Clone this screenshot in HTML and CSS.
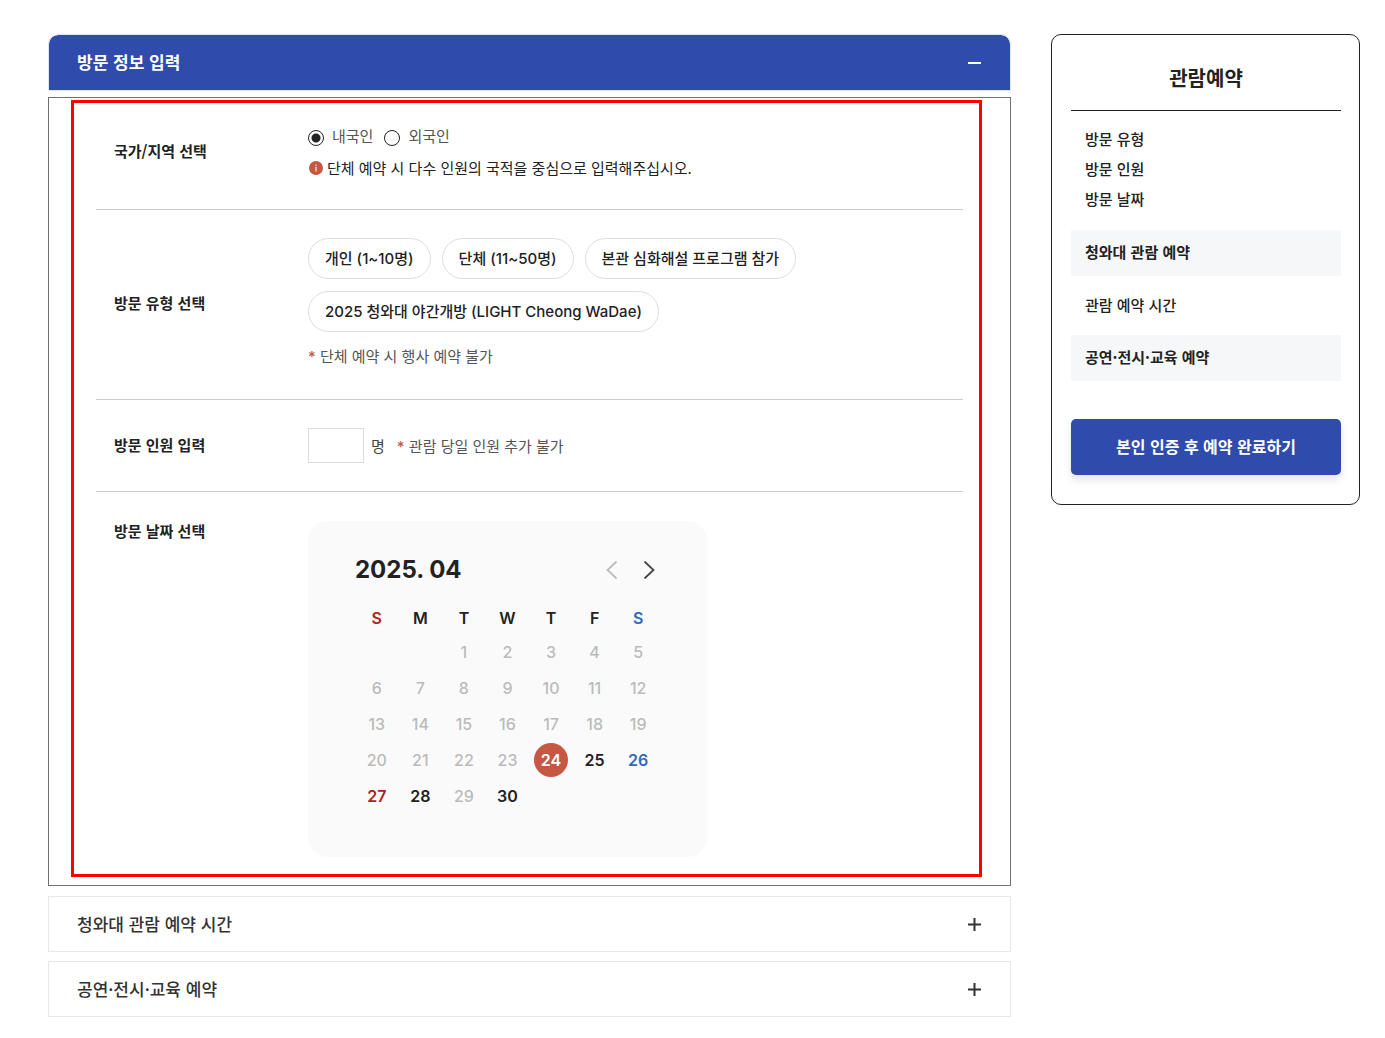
FILE: index.html
```
<!DOCTYPE html>
<html lang="ko">
<head>
    <meta charset="UTF-8">
    <meta name="viewport" content="width=device-width, initial-scale=1.0">
    <title>관람예약</title>
    <link rel="stylesheet" href="styles.css">
</head>
<body>
    <div class="page">
        <main class="accordion">
            <!-- Step 1 -->
            <button type="button" class="acc-head open" aria-expanded="true">
                방문 정보 입력
                <svg width="13" height="13" viewBox="0 0 13 13"><path d="M0 7h13" stroke="currentColor" stroke-width="2"/></svg>
            </button>
            <div class="acc-panel">
                <form class="visit-form">
                    <div class="row row-country" role="radiogroup" aria-labelledby="countryLabel">
                        <span class="row-label" id="countryLabel">국가/지역 선택</span>
                        <div class="row-value">
                            <div class="radios">
                                <label class="radio"><input type="radio" name="country" checked>내국인</label>
                                <label class="radio"><input type="radio" name="country">외국인</label>
                            </div>
                            <p class="notice">
                                <svg width="14" height="14" viewBox="0 0 14 14"><circle cx="7" cy="7" r="7" fill="#c65843"/><path d="M7 3.4v1.4M7 5.8v4.6" stroke="#f3d5cf" stroke-width="1.4"/></svg>
                                단체 예약 시 다수 인원의 국적을 중심으로 입력해주십시오.
                            </p>
                        </div>
                    </div>

                    <div class="row row-type">
                        <span class="row-label">방문 유형 선택</span>
                        <div class="row-value">
                            <div class="pills">
                                <button type="button" class="pill">개인 (1~10명)</button>
                                <button type="button" class="pill">단체 (11~50명)</button>
                                <button type="button" class="pill">본관 심화해설 프로그램 참가</button>
                                <button type="button" class="pill">2025 청와대 야간개방 (LIGHT Cheong WaDae)</button>
                            </div>
                            <p class="hint"><span class="star">*</span> 단체 예약 시 행사 예약 불가</p>
                        </div>
                    </div>

                    <div class="row row-people">
                        <label class="row-label" for="people">방문 인원 입력</label>
                        <div class="row-value people">
                            <input type="text" id="people" class="people-input">
                            <span class="unit">명</span>
                            <p class="hint"><span class="star">*</span> 관람 당일 인원 추가 불가</p>
                        </div>
                    </div>

                    <div class="row row-date">
                        <span class="row-label">방문 날짜 선택</span>
                        <div class="calendar">
                            <div class="cal-head">
                                <h2 class="cal-title">2025. 04</h2>
                                <div class="cal-nav">
                                    <button type="button" class="nav-btn" aria-label="이전 달" disabled>
                                        <svg width="12" height="18" viewBox="0 0 12 18"><path d="M10.500 0.500L1.500 9l9 8.500" fill="none" stroke="currentColor" stroke-width="1.8"/></svg>
                                    </button>
                                    <button type="button" class="nav-btn" aria-label="다음 달">
                                        <svg width="12" height="18" viewBox="0 0 12 18"><path d="M1.500 0.500L10.500 9l-9 8.500" fill="none" stroke="currentColor" stroke-width="1.8"/></svg>
                                    </button>
                                </div>
                            </div>
                            <table class="cal-table">
                                <thead>
                                    <tr><th class="sun">S</th><th>M</th><th>T</th><th>W</th><th>T</th><th>F</th><th class="sat">S</th></tr>
                                </thead>
                                <tbody>
                                    <tr>
                                        <td></td>
                                        <td></td>
                                        <td><button type="button" class="day" disabled>1</button></td>
                                        <td><button type="button" class="day" disabled>2</button></td>
                                        <td><button type="button" class="day" disabled>3</button></td>
                                        <td><button type="button" class="day" disabled>4</button></td>
                                        <td><button type="button" class="day" disabled>5</button></td>
                                    </tr>
                                    <tr>
                                        <td><button type="button" class="day" disabled>6</button></td>
                                        <td><button type="button" class="day" disabled>7</button></td>
                                        <td><button type="button" class="day" disabled>8</button></td>
                                        <td><button type="button" class="day" disabled>9</button></td>
                                        <td><button type="button" class="day" disabled>10</button></td>
                                        <td><button type="button" class="day" disabled>11</button></td>
                                        <td><button type="button" class="day" disabled>12</button></td>
                                    </tr>
                                    <tr>
                                        <td><button type="button" class="day" disabled>13</button></td>
                                        <td><button type="button" class="day" disabled>14</button></td>
                                        <td><button type="button" class="day" disabled>15</button></td>
                                        <td><button type="button" class="day" disabled>16</button></td>
                                        <td><button type="button" class="day" disabled>17</button></td>
                                        <td><button type="button" class="day" disabled>18</button></td>
                                        <td><button type="button" class="day" disabled>19</button></td>
                                    </tr>
                                    <tr>
                                        <td><button type="button" class="day" disabled>20</button></td>
                                        <td><button type="button" class="day" disabled>21</button></td>
                                        <td><button type="button" class="day" disabled>22</button></td>
                                        <td><button type="button" class="day" disabled>23</button></td>
                                        <td><button type="button" class="day today">24</button></td>
                                        <td><button type="button" class="day">25</button></td>
                                        <td><button type="button" class="day sat">26</button></td>
                                    </tr>
                                    <tr>
                                        <td><button type="button" class="day sun">27</button></td>
                                        <td><button type="button" class="day">28</button></td>
                                        <td><button type="button" class="day" disabled>29</button></td>
                                        <td><button type="button" class="day">30</button></td>
                                        <td></td>
                                        <td></td>
                                        <td></td>
                                    </tr>
                                </tbody>
                            </table>
                        </div>
                    </div>
                </form>
            </div>

            <!-- Step 2 -->
            <button type="button" class="acc-head" aria-expanded="false">
                청와대 관람 예약 시간
                <svg width="13" height="13" viewBox="0 0 13 13"><path d="M0 6.5h13M6.5 0v13" stroke="currentColor" stroke-width="2"/></svg>
            </button>

            <!-- Step 3 -->
            <button type="button" class="acc-head" aria-expanded="false">
                공연·전시·교육 예약
                <svg width="13" height="13" viewBox="0 0 13 13"><path d="M0 6.5h13M6.5 0v13" stroke="currentColor" stroke-width="2"/></svg>
            </button>
        </main>

        <!-- Summary box -->
        <aside class="summary">
            <h2 class="summary-title">관람예약</h2>
            <ul class="summary-list">
                <li>방문 유형</li>
                <li>방문 인원</li>
                <li>방문 날짜</li>
            </ul>
            <h3 class="summary-bar">청와대 관람 예약</h3>
            <p class="summary-time">관람 예약 시간</p>
            <h3 class="summary-bar">공연·전시·교육 예약</h3>
            <button type="button" class="submit-btn">본인 인증 후 예약 완료하기</button>
        </aside>
    </div>
</body>
</html>
```
FILE: styles.css
```
* {
    box-sizing: border-box;
    margin: 0;
    padding: 0;
}

body {
    background: #fff;
    color: #222;
    font-family: "Noto Sans CJK KR", sans-serif;
    font-size: 15px;
    line-height: 30px;
}

button,
input {
    font: inherit;
    color: inherit;
}

button {
    background: none;
    border: none;
    cursor: pointer;
}

svg {
    display: block;
    flex: none;
}

.page {
    display: flex;
    align-items: flex-start;
    gap: 40px;
    padding: 34px 25px 20px 48px;
}

/* Accordion */
.accordion {
    flex: 1;
    min-width: 0;
}

.acc-head {
    display: flex;
    align-items: center;
    justify-content: space-between;
    width: 100%;
    min-height: 56px;
    margin-bottom: 9px;
    padding: 0 29px 0 28px;
    border: 1px solid #e8e8e8;
    color: #333;
    font-size: 17px;
    font-weight: 500;
    text-align: left;
}

.acc-head.open {
    min-height: 57px;
    margin-bottom: 6px;
    padding-bottom: 1px;
    background: #2f4bab;
    background-clip: padding-box;
    border-color: #e0e4f2;
    border-radius: 10px 10px 0 0;
    color: #fff;
    font-weight: 700;
}

.acc-panel {
    margin-bottom: 10px;
    padding: 2px 28px 8px 22px;
    border: 1px solid #707070;
}

.visit-form {
    padding: 0 16px 0 22px;
    border: 3px solid #f00;
}

/* Form rows */
.row {
    display: grid;
    grid-template-columns: 194px 1fr;
    align-items: center;
    padding: 28px 0 28px 18px;
    border-bottom: 1px solid #ccc;
}

.row-country {
    padding-top: 17px;
    padding-bottom: 25px;
}

.row-type {
    padding-bottom: 30px;
}

.row-date {
    align-items: start;
    padding-top: 29px;
    padding-bottom: 17px;
    border-bottom: none;
}

.row-label {
    padding-bottom: 2px;
    font-weight: 700;
    line-height: 20px;
}

.radios {
    display: flex;
    gap: 11px;
    color: #555;
    line-height: 32px;
}

.radio {
    display: flex;
    align-items: center;
    gap: 8px;
}

.radio input {
    appearance: none;
    width: 16px;
    height: 16px;
    margin-top: 3px;
    border: 1px solid #222;
    border-radius: 50%;
    background: #fff;
}

.radio input:checked {
    background: radial-gradient(circle, #222 4px, #fff 5px);
}

.notice {
    display: flex;
    align-items: center;
    gap: 4px;
    padding-left: 1px;
    line-height: 32px;
}

.pills {
    display: flex;
    flex-wrap: wrap;
    gap: 12px 11px;
    margin-bottom: 11px;
}

.pill {
    height: 41px;
    padding: 0 16px;
    border: 1px solid #ddd;
    border-radius: 21px;
    font-family: Inter, "Noto Sans CJK KR", sans-serif;
    font-weight: 500;
}

.hint {
    color: #555;
    line-height: 25px;
}

.star {
    color: #c65843;
    font-family: Inter, sans-serif;
    font-weight: 500;
}

.people {
    display: flex;
    align-items: center;
}

.people-input {
    width: 56px;
    height: 35px;
    padding: 0 8px;
    border: 1px solid #ddd;
}

.unit {
    margin: 0 12px 0 7px;
    color: #444;
    line-height: 25px;
}

/* Calendar */
.calendar {
    max-width: 399px;
    padding: 33px 47px 43px;
    background: #fafafa;
    border-radius: 20px;
    font-family: Inter, sans-serif;
    font-size: 16px;
}

.cal-head {
    display: flex;
    align-items: center;
    justify-content: space-between;
    height: 32px;
    margin-bottom: 16px;
}

.cal-title {
    font-size: 24px;
    font-weight: 700;
}

.cal-nav {
    display: flex;
    gap: 25px;
    padding-right: 5px;
}

.nav-btn {
    color: #444;
}

.nav-btn:disabled {
    color: #bbb;
}

.cal-table {
    width: 100%;
    border-collapse: collapse;
    table-layout: fixed;
}

.cal-table th {
    height: 32px;
    font-weight: 600;
}

.cal-table td {
    height: 36px;
    text-align: center;
    vertical-align: middle;
}

.day {
    display: block;
    width: 34px;
    height: 34px;
    margin: 0 auto;
    border-radius: 50%;
    font-weight: 600;
    line-height: 34px;
}

.day:disabled {
    color: #bbb;
    font-weight: 500;
}

.sun {
    color: #b02318;
}

.sat {
    color: #2f69b8;
}

.day.today {
    background: #c65843;
    color: #fff;
}

/* Summary */
.summary {
    flex: 0 0 309px;
    padding: 28px 18px 29px 19px;
    border: 1px solid #222;
    border-radius: 10px;
}

.summary-title {
    padding-bottom: 17px;
    border-bottom: 1px solid #222;
    font-size: 20px;
    font-weight: 700;
    text-align: center;
}

.summary-list {
    padding: 13px 14px 16px;
    font-weight: 500;
    list-style: none;
}

.summary-bar {
    padding: 7px 14px 9px;
    background: #f6f7f9;
    font-size: 15px;
    font-weight: 700;
}

.summary-time {
    padding: 14px 14px 15px;
    font-weight: 500;
}

.submit-btn {
    width: 100%;
    height: 56px;
    margin-top: 38px;
    padding-bottom: 2px;
    background: #2f4bab;
    border-radius: 5px;
    box-shadow: 0 5px 8px rgba(0, 0, 0, 0.1);
    color: #fff;
    font-size: 16px;
    font-weight: 700;
}
```
